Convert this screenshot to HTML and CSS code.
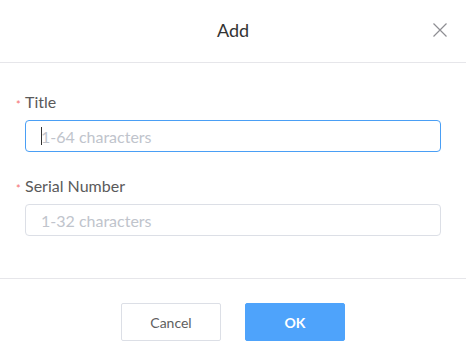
FILE: index.html
```html
<!DOCTYPE html>
<html lang="en">
<head>
  <meta charset="UTF-8">
  <title>Add</title>
  <link rel="stylesheet" href="styles.css">
</head>
<body>
  <div class="dialog">
    <div class="dialog-header">
      <span class="dialog-title">Add</span>
      <span class="close-btn" aria-label="Close">
        <svg viewBox="0 0 14 14" width="14" height="14">
          <path d="M0.5 0.5L13.5 13.5M13.5 0.5L0.5 13.5" stroke="#8e8e93" stroke-width="1.2" fill="none"/>
        </svg>
      </span>
    </div>

    <div class="dialog-body">
      <div class="form-item">
        <label class="form-label"><span class="required">*</span>Title</label>
        <div class="input-wrap">
          <input class="form-input is-focus" type="text" placeholder="1-64 characters">
          <span class="caret"></span>
        </div>
      </div>
      <div class="form-item">
        <label class="form-label"><span class="required">*</span>Serial Number</label>
        <div class="input-wrap">
          <input class="form-input" type="text" placeholder="1-32 characters">
        </div>
      </div>
    </div>

    <div class="dialog-footer">
      <button class="btn btn-default">Cancel</button>
      <button class="btn btn-primary">OK</button>
    </div>
  </div>
</body>
</html>
```

FILE: styles.css
```css
* {
  margin: 0;
  padding: 0;
  box-sizing: border-box;
}

body {
  background-color: #fff;
  font-family: Lato, "Liberation Sans", sans-serif;
  width: 466px;
  height: 359px;
  overflow: hidden;
}

.dialog {
  display: flex;
  flex-direction: column;
  height: 100%;
}

.dialog-header {
  height: 63px;
  border-bottom: 1px solid #e6e6ea;
  display: flex;
  align-items: center;
  justify-content: center;
  position: relative;
}

.dialog-title {
  font-size: 18px;
  color: #333;
  margin-top: -2px;
}

.close-btn {
  position: absolute;
  right: 19px;
  top: 23px;
  width: 14px;
  height: 14px;
  display: flex;
}

.dialog-body {
  padding: 29px 25px 0;
  height: 216px;
  border-bottom: 1px solid #e6e6ea;
}

.form-item {
  margin-bottom: 24px;
}

.form-label {
  display: block;
  font-size: 16px;
  line-height: 20px;
  color: #5a5a5a;
  margin-bottom: 8px;
  position: relative;
}

.required {
  position: absolute;
  left: -9px;
  top: 3px;
  color: #f56c6c;
  font-size: 11px;
}

.input-wrap {
  position: relative;
}

.form-input {
  width: 100%;
  height: 32px;
  border: 1px solid #dcdfe6;
  border-radius: 4px;
  padding: 0 15px;
  font-family: inherit;
  font-size: 16px;
  color: #333;
  outline: none;
}

.form-input::placeholder {
  color: #c0c4cc;
}

.form-input.is-focus {
  border-color: #4a9ff5;
}

.caret {
  position: absolute;
  left: 16px;
  top: 7px;
  width: 1px;
  height: 18px;
  background-color: #333;
}

.dialog-footer {
  display: flex;
  justify-content: center;
  gap: 24px;
  padding-top: 24px;
}

.btn {
  width: 100px;
  height: 38px;
  border-radius: 2px;
  font-family: inherit;
  font-size: 14px;
  cursor: pointer;
}

.btn-default {
  background-color: #fff;
  border: 1px solid #dcdfe6;
  color: #606060;
}

.btn-primary {
  background-color: #4ea3fb;
  border: 1px solid #4ea3fb;
  color: #fff;
  font-weight: bold;
}
```
